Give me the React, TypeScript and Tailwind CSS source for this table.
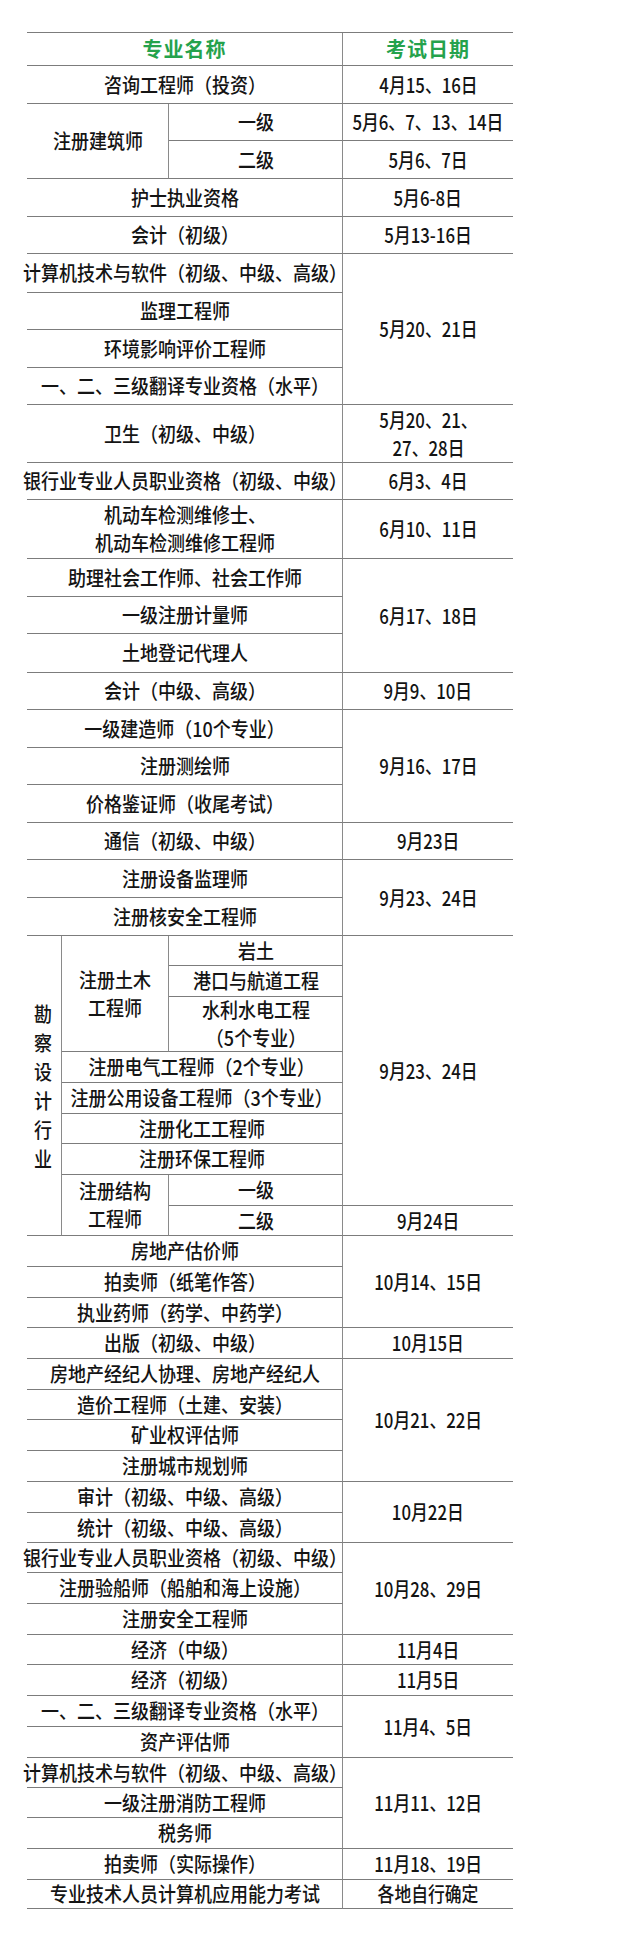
import React from 'react';

type Cell = {
  cls: string;
  text: React.ReactNode;
  r?: boolean;
  head?: boolean;
  date?: boolean;
};

const NAME = 'col-start-1 col-end-4';
const DATE = 'col-start-4 col-end-5';

function Two({ a, b }: { a: string; b: string }) {
  return (
    <span className="flex flex-col leading-[28px]">
      <span>{a}</span>
      <span>{b}</span>
    </span>
  );
}

const cells: Cell[] = [
  { cls: `${NAME} row-start-1 row-end-2`, text: '专业名称', head: true, r: true },
  { cls: `${DATE} row-start-1 row-end-2`, text: '考试日期', head: true },

  { cls: `${NAME} row-start-2 row-end-3`, text: '咨询工程师（投资）', r: true },
  { cls: `${DATE} row-start-2 row-end-3`, text: '4月15、16日', date: true },

  { cls: 'col-start-1 col-end-3 row-start-3 row-end-5', text: '注册建筑师', r: true },
  { cls: 'col-start-3 col-end-4 row-start-3 row-end-4', text: '一级', r: true },
  { cls: 'col-start-3 col-end-4 row-start-4 row-end-5', text: '二级', r: true },
  { cls: `${DATE} row-start-3 row-end-4`, text: '5月6、7、13、14日', date: true },
  { cls: `${DATE} row-start-4 row-end-5`, text: '5月6、7日', date: true },

  { cls: `${NAME} row-start-5 row-end-6`, text: '护士执业资格', r: true },
  { cls: `${DATE} row-start-5 row-end-6`, text: '5月6-8日', date: true },

  { cls: `${NAME} row-start-6 row-end-7`, text: '会计（初级）', r: true },
  { cls: `${DATE} row-start-6 row-end-7`, text: '5月13-16日', date: true },

  { cls: `${NAME} row-start-7 row-end-8`, text: '计算机技术与软件（初级、中级、高级）', r: true },
  { cls: `${NAME} row-start-8 row-end-9`, text: '监理工程师', r: true },
  { cls: `${NAME} row-start-9 row-end-10`, text: '环境影响评价工程师', r: true },
  { cls: `${NAME} row-start-10 row-end-11`, text: '一、二、三级翻译专业资格（水平）', r: true },
  { cls: `${DATE} row-start-7 row-end-11`, text: '5月20、21日', date: true },

  { cls: `${NAME} row-start-11 row-end-12`, text: '卫生（初级、中级）', r: true },
  { cls: `${DATE} row-start-11 row-end-12`, text: <Two a="5月20、21、" b="27、28日" />, date: true },

  { cls: `${NAME} row-start-12 row-end-13`, text: '银行业专业人员职业资格（初级、中级）', r: true },
  { cls: `${DATE} row-start-12 row-end-13`, text: '6月3、4日', date: true },

  { cls: `${NAME} row-start-13 row-end-14`, text: <Two a="机动车检测维修士、" b="机动车检测维修工程师" />, r: true },
  { cls: `${DATE} row-start-13 row-end-14`, text: '6月10、11日', date: true },

  { cls: `${NAME} row-start-14 row-end-15`, text: '助理社会工作师、社会工作师', r: true },
  { cls: `${NAME} row-start-15 row-end-16`, text: '一级注册计量师', r: true },
  { cls: `${NAME} row-start-16 row-end-17`, text: '土地登记代理人', r: true },
  { cls: `${DATE} row-start-14 row-end-17`, text: '6月17、18日', date: true },

  { cls: `${NAME} row-start-17 row-end-18`, text: '会计（中级、高级）', r: true },
  { cls: `${DATE} row-start-17 row-end-18`, text: '9月9、10日', date: true },

  { cls: `${NAME} row-start-18 row-end-19`, text: '一级建造师（10个专业）', r: true },
  { cls: `${NAME} row-start-19 row-end-20`, text: '注册测绘师', r: true },
  { cls: `${NAME} row-start-20 row-end-21`, text: '价格鉴证师（收尾考试）', r: true },
  { cls: `${DATE} row-start-18 row-end-21`, text: '9月16、17日', date: true },

  { cls: `${NAME} row-start-21 row-end-22`, text: '通信（初级、中级）', r: true },
  { cls: `${DATE} row-start-21 row-end-22`, text: '9月23日', date: true },

  { cls: `${NAME} row-start-22 row-end-23`, text: '注册设备监理师', r: true },
  { cls: `${NAME} row-start-23 row-end-24`, text: '注册核安全工程师', r: true },
  { cls: `${DATE} row-start-22 row-end-24`, text: '9月23、24日', date: true },

  {
    cls: 'col-start-1 col-end-2 row-start-24 row-end-33',
    text: (
      <span className="flex flex-col leading-[29px] pr-[2px]">
        {'勘察设计行业'.split('').map((ch) => (
          <span key={ch}>{ch}</span>
        ))}
      </span>
    ),
    r: true,
  },
  { cls: 'col-start-2 col-end-3 row-start-24 row-end-27', text: <Two a="注册土木" b="工程师" />, r: true },
  { cls: 'col-start-3 col-end-4 row-start-24 row-end-25', text: '岩土', r: true },
  { cls: 'col-start-3 col-end-4 row-start-25 row-end-26', text: '港口与航道工程', r: true },
  { cls: 'col-start-3 col-end-4 row-start-26 row-end-27', text: <Two a="水利水电工程" b="（5个专业）" />, r: true },
  { cls: 'col-start-2 col-end-4 row-start-27 row-end-28', text: '注册电气工程师（2个专业）', r: true },
  { cls: 'col-start-2 col-end-4 row-start-28 row-end-29', text: '注册公用设备工程师（3个专业）', r: true },
  { cls: 'col-start-2 col-end-4 row-start-29 row-end-30', text: '注册化工工程师', r: true },
  { cls: 'col-start-2 col-end-4 row-start-30 row-end-31', text: '注册环保工程师', r: true },
  { cls: 'col-start-2 col-end-3 row-start-31 row-end-33', text: <Two a="注册结构" b="工程师" />, r: true },
  { cls: 'col-start-3 col-end-4 row-start-31 row-end-32', text: '一级', r: true },
  { cls: 'col-start-3 col-end-4 row-start-32 row-end-33', text: '二级', r: true },
  { cls: `${DATE} row-start-24 row-end-32`, text: '9月23、24日', date: true },
  { cls: `${DATE} row-start-32 row-end-33`, text: '9月24日', date: true },

  { cls: `${NAME} row-start-33 row-end-34`, text: '房地产估价师', r: true },
  { cls: `${NAME} row-start-34 row-end-35`, text: '拍卖师（纸笔作答）', r: true },
  { cls: `${NAME} row-start-35 row-end-36`, text: '执业药师（药学、中药学）', r: true },
  { cls: `${DATE} row-start-33 row-end-36`, text: '10月14、15日', date: true },

  { cls: `${NAME} row-start-36 row-end-37`, text: '出版（初级、中级）', r: true },
  { cls: `${DATE} row-start-36 row-end-37`, text: '10月15日', date: true },

  { cls: `${NAME} row-start-37 row-end-38`, text: '房地产经纪人协理、房地产经纪人', r: true },
  { cls: `${NAME} row-start-38 row-end-39`, text: '造价工程师（土建、安装）', r: true },
  { cls: `${NAME} row-start-39 row-end-40`, text: '矿业权评估师', r: true },
  { cls: `${NAME} row-start-40 row-end-41`, text: '注册城市规划师', r: true },
  { cls: `${DATE} row-start-37 row-end-41`, text: '10月21、22日', date: true },

  { cls: `${NAME} row-start-41 row-end-42`, text: '审计（初级、中级、高级）', r: true },
  { cls: `${NAME} row-start-42 row-end-43`, text: '统计（初级、中级、高级）', r: true },
  { cls: `${DATE} row-start-41 row-end-43`, text: '10月22日', date: true },

  { cls: `${NAME} row-start-43 row-end-44`, text: '银行业专业人员职业资格（初级、中级）', r: true },
  { cls: `${NAME} row-start-44 row-end-45`, text: '注册验船师（船舶和海上设施）', r: true },
  { cls: `${NAME} row-start-45 row-end-46`, text: '注册安全工程师', r: true },
  { cls: `${DATE} row-start-43 row-end-46`, text: '10月28、29日', date: true },

  { cls: `${NAME} row-start-46 row-end-47`, text: '经济（中级）', r: true },
  { cls: `${DATE} row-start-46 row-end-47`, text: '11月4日', date: true },

  { cls: `${NAME} row-start-47 row-end-48`, text: '经济（初级）', r: true },
  { cls: `${DATE} row-start-47 row-end-48`, text: '11月5日', date: true },

  { cls: `${NAME} row-start-48 row-end-49`, text: '一、二、三级翻译专业资格（水平）', r: true },
  { cls: `${NAME} row-start-49 row-end-50`, text: '资产评估师', r: true },
  { cls: `${DATE} row-start-48 row-end-50`, text: '11月4、5日', date: true },

  { cls: `${NAME} row-start-50 row-end-51`, text: '计算机技术与软件（初级、中级、高级）', r: true },
  { cls: `${NAME} row-start-51 row-end-52`, text: '一级注册消防工程师', r: true },
  { cls: `${NAME} row-start-52 row-end-53`, text: '税务师', r: true },
  { cls: `${DATE} row-start-50 row-end-53`, text: '11月11、12日', date: true },

  { cls: `${NAME} row-start-53 row-end-54`, text: '拍卖师（实际操作）', r: true },
  { cls: `${DATE} row-start-53 row-end-54`, text: '11月18、19日', date: true },

  { cls: `${NAME} row-start-54 row-end-55`, text: '专业技术人员计算机应用能力考试', r: true },
  { cls: `${DATE} row-start-54 row-end-55`, text: '各地自行确定', date: true },
];

export default function App() {
  return (
    <div className="w-[640px] min-h-[1937px] bg-white pt-[32px] pl-[27px] font-['Noto_Sans_CJK_SC','Noto_Sans',sans-serif] text-[#141414]">
      <div className="grid w-[486px] grid-cols-[35px_107px_174px_170px] grid-rows-[33px_38px_37px_38px_38px_37px_39px_37px_38px_37px_58px_37px_59px_38px_37px_39px_37px_38px_37px_38px_37px_38px_38px_30px_31px_55px_31px_31px_30px_31px_31px_30px_31px_31px_30px_31px_31px_30px_31px_31px_31px_30px_30px_31px_31px_30px_31px_31px_31px_30px_30px_31px_31px_29px] border-t border-[#7c7c7c]">
        {cells.map((c, i) => (
          <div
            key={i}
            className={`${c.cls} flex items-center justify-center text-center whitespace-nowrap border-b border-[#7c7c7c] ${
              c.r ? 'border-r border-r-[#8a8a8a]' : ''
            } ${
              c.head
                ? 'text-[20px] font-bold text-[#25a24c] tracking-[1px]'
                : 'text-[20px] font-medium leading-[28px]'
            }`}
          >
            {c.head ? (
              c.text
            ) : (
              <span className={`inline-block ${c.date ? 'scale-x-[0.84]' : 'scale-x-[0.9]'}`}>{c.text}</span>
            )}
          </div>
        ))}
      </div>
    </div>
  );
}
